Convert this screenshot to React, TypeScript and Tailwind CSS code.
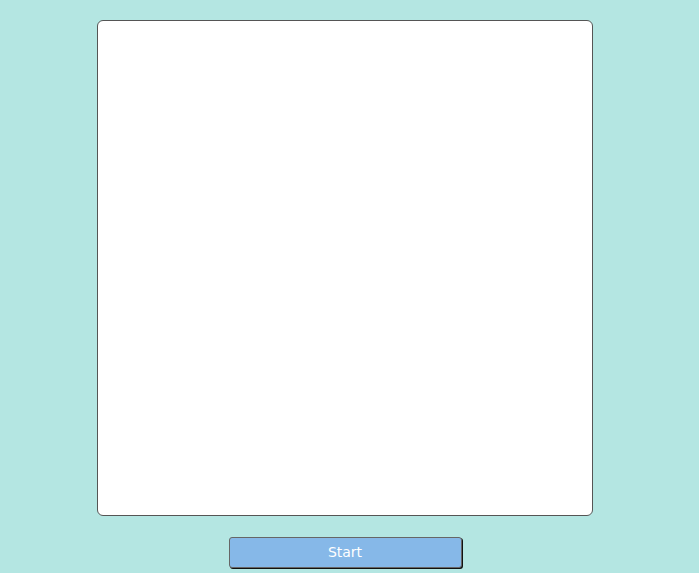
export default function App() {
  return (
    <div className="min-h-[573px] w-full bg-[#b4e6e2]">
      <div className="flex w-[690px] flex-col items-center pt-[20px]">
        <div className="h-[496px] w-[496px] rounded-[6px] border border-[#555] bg-white" />
        <button
          className="mt-[21px] flex h-[31px] w-[233px] items-center justify-center rounded-[3px] border border-[#666] bg-[#86b8e8] text-[14px] text-white shadow-[1px_1px_0_#111]"
          style={{ fontFamily: '"DejaVu Sans", sans-serif' }}
        >
          Start
        </button>
      </div>
    </div>
  );
}
